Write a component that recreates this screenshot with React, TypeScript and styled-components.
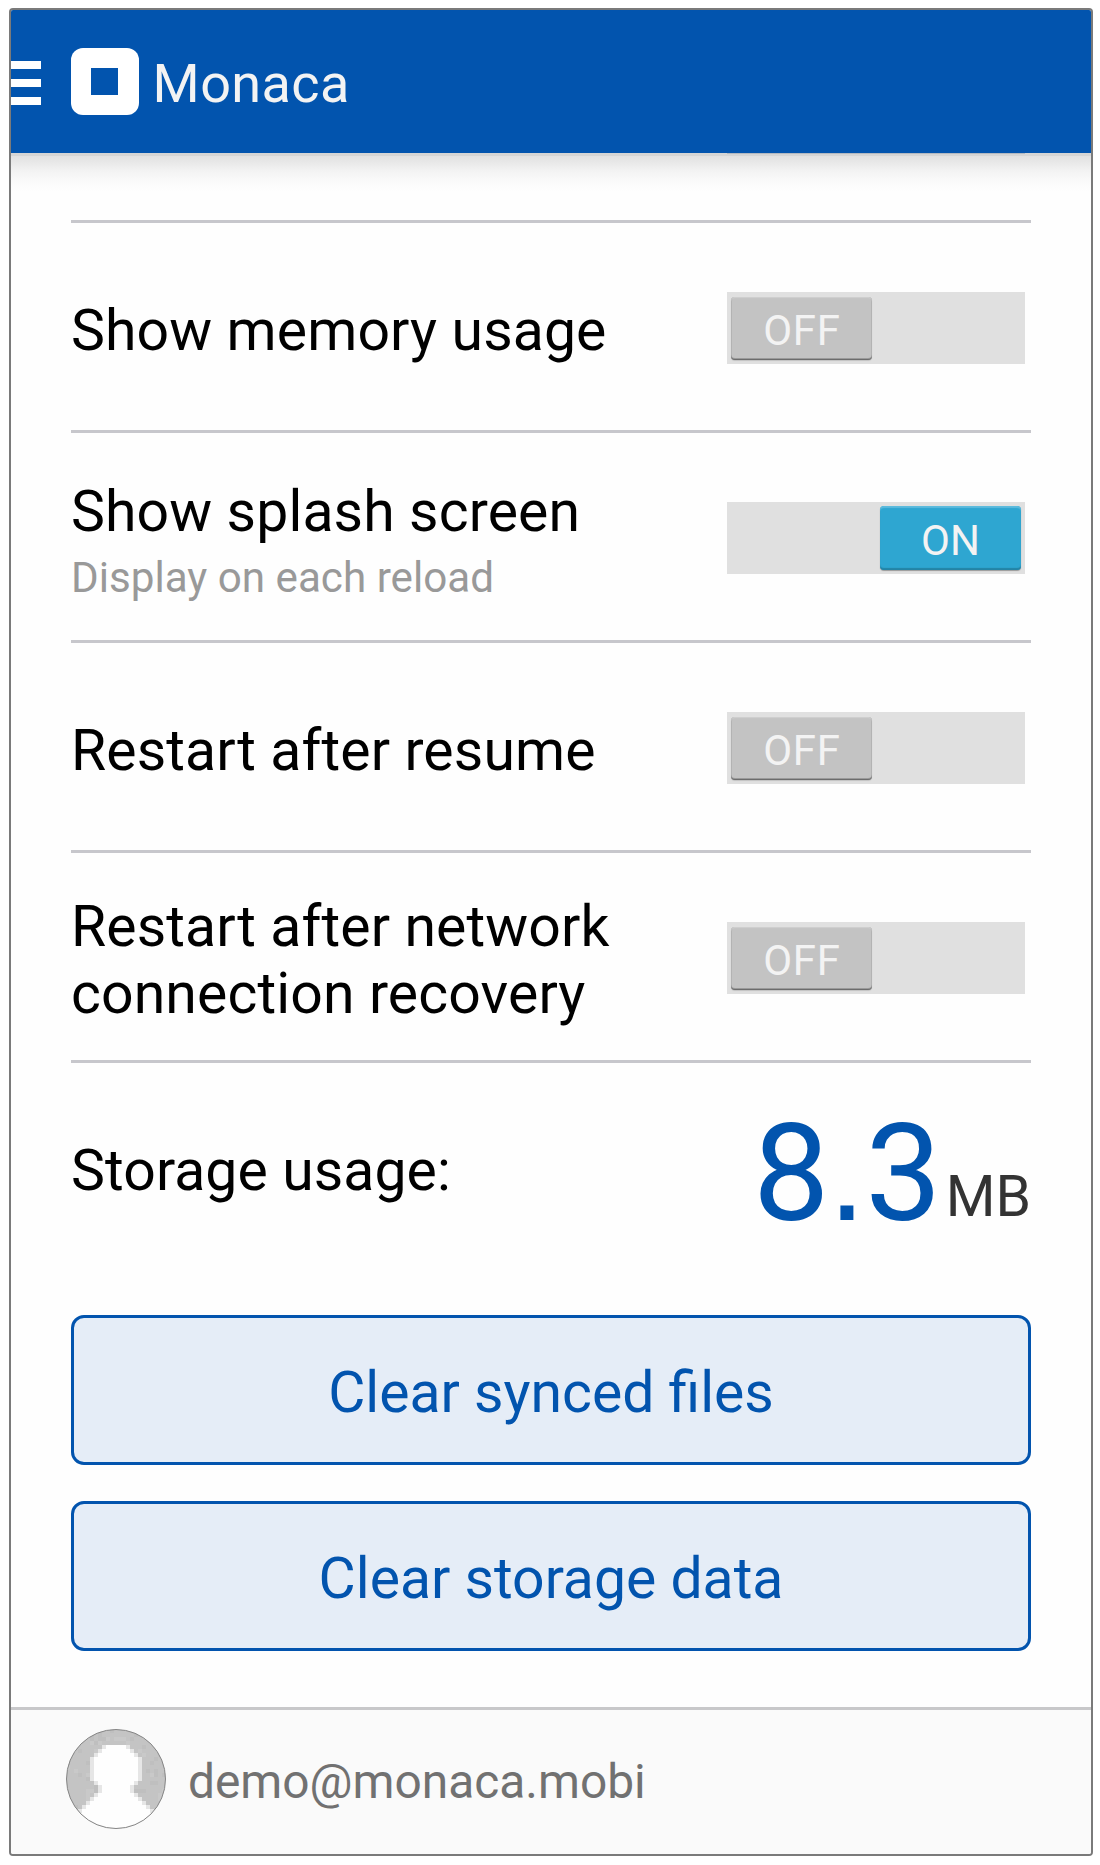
import React from "react";
import styled, { createGlobalStyle } from "styled-components";

const GlobalStyle = createGlobalStyle`
  *, *::before, *::after { box-sizing: border-box; }
  body {
    margin: 0;
    background: #fff;
    font-family: Roboto, "Liberation Sans", sans-serif;
    font-size: 57.1px;
    line-height: 67px;
    color: #000;
  }
`;

const Screen = styled.main`
  display: flex;
  flex-direction: column;
  width: 1084px;
  height: 1848px;
  margin: 8px 0 0 9px;
  border: 2px solid #7a7a7a;
  border-radius: 4px;
  overflow: hidden;
  background: #fefefe;
`;

const Header = styled.header`
  display: flex;
  align-items: flex-start;
  flex: none;
  height: 143px;
  background: #0254ae;
`;

const MenuButton = styled.div`
  display: flex;
  flex-direction: column;
  gap: 10px;
  width: 30px;
  margin: 51px 30px 0 0;
`;

const MenuBar = styled.span`
  height: 8px;
  background: #fff;
`;

const Logo = styled.div`
  width: 67.6px;
  height: 67px;
  margin-top: 38px;
  padding: 20px 20px 20px 20.4px;
  border-radius: 12px;
  background: #fff;
`;

const LogoHole = styled.span`
  display: block;
  width: 26.6px;
  height: 27px;
  background: #0254ae;
`;

const Title = styled.h1`
  margin: 42px 0 0 14px;
  font-size: 54px;
  font-weight: 400;
  line-height: 63px;
  letter-spacing: 0.4px;
  color: #f3f3f3;
`;

const HeaderShadow = styled.div`
  flex: none;
  height: 67px;
  padding-left: 716px;
  background: linear-gradient(
    #d5d5d5 0, #d5d5d5 3px, #e1e1e1 3px, #e9e9e9 10px, #f3f3f3 18px, #fafafa 28px, #fefefe 38px
  );
`;

const HiddenRowEdge = styled.div`
  width: 298px;
  height: 1px;
  background: #b3b9c1;
`;

const Content = styled.section`
  flex: 1;
  padding: 0 60px;
`;

const SettingRow = styled.div`
  display: flex;
  align-items: center;
  justify-content: space-between;
  height: 210px;
  padding-right: 6px;
  border-top: 3px solid #c7c7cc;
`;

const Label = styled.div`
  width: 580px;
  padding-top: 7.5px;
  letter-spacing: 0.13px;
`;

const Hint = styled.div`
  margin-top: 8px;
  font-size: 42.2px;
  line-height: 49px;
  letter-spacing: 0;
  color: #999;
`;

const Toggle = styled.div<{ $on: boolean }>`
  display: flex;
  justify-content: ${(p) => (p.$on ? "flex-end" : "flex-start")};
  width: 298px;
  height: 72px;
  margin-top: 3px;
  padding: ${(p) => (p.$on ? 4 : 5)}px 4px 4px;
  background: #e0e0e0;
`;

const Thumb = styled.span<{ $on: boolean }>`
  width: 141px;
  height: ${(p) => (p.$on ? 64 : 63)}px;
  padding-top: ${(p) => (p.$on ? 10 : 9)}px;
  border-radius: 4px;
  background: ${(p) => (p.$on ? "#2ea6d1" : "#c3c3c3")};
  box-shadow: ${(p) =>
    p.$on
      ? "inset 0 2px 1px #5dbbdd, inset 0 -2px 1px #2384a6, 0 1px 1px #999"
      : "inset 0 1px 1px #d0d0d0, inset 0 -1px 0 #6c6c6c, inset 0 -2px 0 #9a9a9a, inset 1px 0 0 #b0b0b0, inset -1px 0 0 #b0b0b0, 0 1px 1px #c2c2c2"};
  font-size: 42px;
  line-height: 49px;
  text-align: center;
  letter-spacing: ${(p) => (p.$on ? 0 : 0.8)}px;
  text-indent: ${(p) => (p.$on ? 0 : 1)}px;
  color: #f3f3f3;
`;

const StorageRow = styled.div`
  display: flex;
  align-items: flex-start;
  height: 255px;
  padding-top: 31px;
  border-top: 3px solid #c7c7cc;
`;

const StorageLabel = styled.div`
  flex: 1;
  margin-top: 43px;
  letter-spacing: 0.1px;
`;

const Amount = styled.div`
  font-size: 136px;
  line-height: 159px;
  color: #0254ae;
`;

const DecimalPoint = styled.span`
  margin: 0 -0.5px 0 -1.5px;
  font-family: "Liberation Sans", sans-serif;
  line-height: 0;
`;

const Unit = styled.div`
  margin: 69px 0 0 4px;
  font-size: 57px;
  color: #333;
`;

const Actions = styled.div`
  display: flex;
  flex-direction: column;
  gap: 36px;
`;

const ActionButton = styled.button`
  height: 150px;
  padding: 5px 0 0;
  border: 3px solid #0254ae;
  border-radius: 13px;
  background: #e5edf7;
  font: inherit;
  color: #0254ae;
`;

const Footer = styled.footer`
  display: flex;
  align-items: flex-start;
  flex: none;
  height: 147px;
  padding: 19px 55px 0;
  border-top: 3px solid #c8c8ca;
  background: #fafafa;
`;

const AvatarImage = styled.svg`
  flex: none;
  width: 100px;
  height: 100px;
`;

const Email = styled.div`
  margin: 25px 0 0 22px;
  font-size: 47.85px;
  line-height: 57px;
  color: #717171;
`;

const settings: { label: string; hint?: string; on: boolean }[] = [
  { label: "Show memory usage", on: false },
  { label: "Show splash screen", hint: "Display on each reload", on: true },
  { label: "Restart after resume", on: false },
  { label: "Restart after network connection recovery", on: false },
];

// Silhouette spans on a 25x25 grid: [row, first column, end column]
const silhouette = [
  [4, 10, 15], [5, 9, 16], [6, 8, 17], [7, 7, 18], [8, 7, 18], [9, 7, 18],
  [10, 7, 18], [11, 7, 18], [12, 7, 18], [13, 8, 17], [14, 9, 16], [15, 9, 16],
  [16, 8, 17], [17, 7, 18], [18, 6, 19], [19, 5, 20], [20, 4, 21], [21, 3, 22],
  [22, 0, 25], [23, 0, 25], [24, 0, 25],
];

const noise = (n: number) => {
  const v = Math.sin(n * 12.9898) * 43758.5453;
  return v - Math.floor(v);
};

const grain = Array.from({ length: 625 }, (_, i) => ({
  x: i % 25,
  y: Math.floor(i / 25),
  tone: noise(i + 1),
})).filter((cell) => cell.tone < 0.3);

function Avatar() {
  return (
    <AvatarImage viewBox="0 0 100 100" aria-hidden="true">
      <defs>
        <clipPath id="avatar-circle">
          <circle cx="50" cy="50" r="49.5" />
        </clipPath>
      </defs>
      <g clipPath="url(#avatar-circle)">
        <rect width="100" height="100" fill="#c4c4c4" />
        {grain.map((c) => (
          <rect key={c.y * 25 + c.x} x={c.x * 4} y={c.y * 4} width="4" height="4" fill={c.tone < 0.15 ? "#c9c9c9" : "#bfbfbf"} />
        ))}
        {silhouette.map(([row, from, to]) => (
          <g key={row}>
            <rect x={(from - 1) * 4} y={row * 4} width={(to - from + 2) * 4} height="4" fill="#e6e6e6" />
            <rect x={from * 4} y={row * 4} width={(to - from) * 4} height="4" fill="#fefefe" />
          </g>
        ))}
      </g>
      <circle cx="50" cy="50" r="49.5" fill="none" stroke="#858585" />
    </AvatarImage>
  );
}

export default function App() {
  return (
    <>
      <GlobalStyle />
      <Screen>
        <Header>
          <MenuButton>
            <MenuBar />
            <MenuBar />
            <MenuBar />
          </MenuButton>
          <Logo>
            <LogoHole />
          </Logo>
          <Title>Monaca</Title>
        </Header>
        <HeaderShadow>
          <HiddenRowEdge />
        </HeaderShadow>
        <Content>
          {settings.map(({ label, hint, on }) => (
            <SettingRow key={label}>
              <Label>
                {label}
                {hint && <Hint>{hint}</Hint>}
              </Label>
              <Toggle $on={on}>
                <Thumb $on={on}>{on ? "ON" : "OFF"}</Thumb>
              </Toggle>
            </SettingRow>
          ))}
          <StorageRow>
            <StorageLabel>Storage usage:</StorageLabel>
            <Amount>
              8<DecimalPoint>.</DecimalPoint>3
            </Amount>
            <Unit>MB</Unit>
          </StorageRow>
          <Actions>
            <ActionButton>Clear synced files</ActionButton>
            <ActionButton>Clear storage data</ActionButton>
          </Actions>
        </Content>
        <Footer>
          <Avatar />
          <Email>demo@monaca.mobi</Email>
        </Footer>
      </Screen>
    </>
  );
}
